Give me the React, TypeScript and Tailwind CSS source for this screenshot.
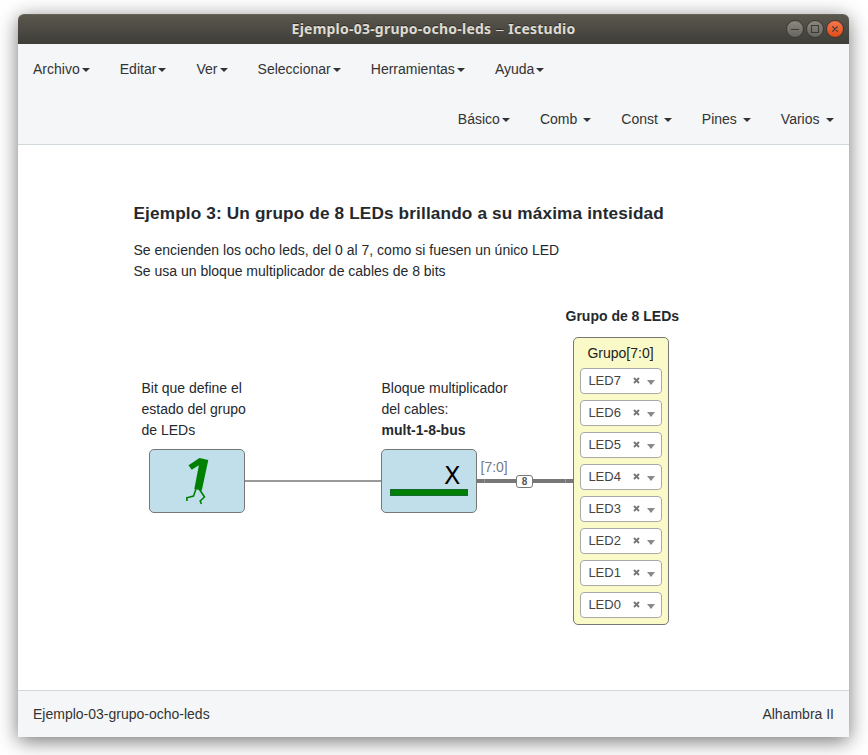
import React from 'react';

const menus = ['Archivo', 'Editar', 'Ver', 'Seleccionar', 'Herramientas', 'Ayuda'];
const blocks = ['Básico', 'Comb ', 'Const ', 'Pines ', 'Varios '];
const leds = [7, 6, 5, 4, 3, 2, 1, 0];

function NavItem({ label }: { label: string }) {
  return (
    <li className="flex h-[50px] items-center whitespace-pre px-[15px]">
      <span>{label}</span>
      <span className="ml-[2.1px] mt-px h-0 w-0 border-x-4 border-t-4 border-x-transparent border-t-[#333]" />
    </li>
  );
}

function TitleBar() {
  return (
    <header className="relative flex h-[30px] shrink-0 items-center justify-center rounded-t-[6px] border-t border-[#66635a] bg-linear-to-b from-[#5a574e] to-[#3e3d38]">
      <h1 className="-mt-[3px] flex h-5 items-center whitespace-pre font-['Noto_Sans',sans-serif] text-[14px] font-bold tracking-[0.23px] text-[#dfdbd2] [text-shadow:0_-1px_0_#2d2c28]">
        <span>Ejemplo-03-grupo-ocho-leds</span>
        <span className="mx-[3.5px] w-[10px] text-center text-[18px] font-light leading-none tracking-normal">–</span>
        <span>Icestudio</span>
      </h1>
      <svg className="absolute right-[4px] top-[4px]" width="60" height="20" viewBox="0 0 60 20" fill="none">
        <defs>
          <linearGradient id="gray" x1="0" y1="0" x2="0" y2="1">
            <stop stopColor="#8b8980" />
            <stop offset="1" stopColor="#66645e" />
          </linearGradient>
          <linearGradient id="orange" x1="0" y1="0" x2="0" y2="1">
            <stop stopColor="#f5794f" />
            <stop offset="1" stopColor="#df4a16" />
          </linearGradient>
        </defs>
        <circle cx="10" cy="10" r="8.5" fill="url(#gray)" stroke="#373630" />
        <circle cx="30" cy="10" r="8.5" fill="url(#gray)" stroke="#373630" />
        <circle cx="50" cy="10" r="8.5" fill="url(#orange)" stroke="#373630" />
        <path d="M6 10.5h8M26.5 6.5h7v7h-7zM47.3 7.3l5.4 5.4M52.7 7.3l-5.4 5.4" stroke="#3c3b36" strokeWidth="1.1" />
      </svg>
    </header>
  );
}

function LedSelect({ n }: { n: number }) {
  return (
    <div className="flex h-[26px] w-[82px] items-center rounded-[4px] border border-[#aaa] bg-white pl-[7.4px] text-[13px] text-[#444]">
      <span className="-mt-px w-[44.6px]">LED{n}</span>
      <svg width="7" height="7" viewBox="0 0 7 7" className="-mt-[2px]">
        <path d="M1 1l5 5M6 1L1 6" stroke="#777" strokeWidth="1.9" />
      </svg>
      <span className="ml-[7px] mt-[3px] h-0 w-0 border-x-4 border-t-[5px] border-x-transparent border-t-[#888]" />
    </div>
  );
}

const note = 'absolute whitespace-nowrap text-[14px] leading-[21px] text-[#24292e]';

function Canvas() {
  return (
    <main className="relative min-h-0 flex-1 bg-white">
      <div className={`${note} left-[115.5px] top-[57px]`}>
        <h2 className="text-[17.2px] font-bold leading-[22px] tracking-[0.147px]">Ejemplo 3: Un grupo de 8 LEDs brillando a su máxima intesidad</h2>
        <p className="mt-[16px]">Se encienden los ocho leds, del 0 al 7, como si fuesen un único LED</p>
        <p>Se usa un bloque multiplicador de cables de 8 bits</p>
      </div>
      <p className={`${note} left-[123.5px] top-[233px]`}>Bit que define el<br />estado del grupo<br />de LEDs</p>
      <p className={`${note} left-[363.5px] top-[233px]`}>Bloque multiplicador<br />del cables:<br /><b>mult-1-8-bus</b></p>
      <p className={`${note} left-[547.5px] top-[161px] font-bold`}>Grupo de 8 LEDs</p>

      <div className="absolute left-[227px] top-[335px] h-[2px] w-[136px] bg-[#999]" />
      <div className="absolute left-[459px] top-[334px] flex h-[4px] w-[96px] justify-between bg-[#777] px-[7px]">
        <span className="w-px bg-[#999]" />
        <span className="w-px bg-[#999]" />
      </div>
      <span className="absolute left-[462.5px] top-[312px] text-[14px] leading-5 text-[#777788]">[7:0]</span>
      <span className="absolute left-[498px] top-[329.5px] flex h-[13px] w-[17px] items-center justify-center rounded-[3px] border border-[#777] bg-white pt-px text-[10px] font-bold leading-none text-[#555]">8</span>

      <div className="absolute left-[131px] top-[304px] h-[64px] w-[96px] rounded-[5px] border border-[#777] bg-[#c0dfeb]">
        <svg width="94" height="62" viewBox="0 0 94 62">
          <path d="M49.5 8l8.8 2-6.5 30.5-7.5-1.6 4.6-23.6-7.2 4.4-3.2-4.4z" fill="#008000" />
          <path d="M46 39l-2.5 7-6.7 1.8.2 3.2M49.5 39.5l5 7.5-4.3 4 1.2 3" fill="none" stroke="#008000" strokeWidth="1.6" />
        </svg>
      </div>
      <div className="absolute left-[363px] top-[304px] h-[64px] w-[96px] rounded-[5px] border border-[#777] bg-[#c0dfeb]">
        <span className="absolute left-[62px] top-[10px] font-['DejaVu_Sans',sans-serif] text-[24px] leading-[32px] text-black">X</span>
        <div className="absolute left-[8px] top-[39px] h-[7px] w-[78px] border border-[#176b32] bg-[#008000]" />
      </div>
      <section className="absolute left-[555px] top-[192px] h-[288px] w-[96px] rounded-[5px] border border-[#777] bg-[#fafac8] px-[6px]">
        <h3 className="h-[30px] pr-px pt-[5px] text-center text-[14px] leading-5 text-[#222]">Grupo[7:0]</h3>
        <div className="flex flex-col gap-[6px]">
          {leds.map((n) => <LedSelect key={n} n={n} />)}
        </div>
      </section>
    </main>
  );
}

export default function App() {
  return (
    <div className="h-[755px] w-[868px] overflow-hidden bg-white px-[18px] pt-[14px] font-['Liberation_Sans',Arial,sans-serif]">
      <div className="flex h-[723px] w-[831px] flex-col rounded-t-[6px] text-[14px] text-[#333] shadow-[0_4px_20px_rgba(0,0,0,0.55)]">
        <TitleBar />
        <nav className="h-[101px] shrink-0 border-b border-[#d1d8dc] bg-[#f4f6f8]">
          <ul className="flex">{menus.map((m) => <NavItem key={m} label={m} />)}</ul>
          <ul className="flex justify-end pr-[0.5px]">{blocks.map((m) => <NavItem key={m} label={m} />)}</ul>
        </nav>
        <Canvas />
        <footer className="flex h-[47px] shrink-0 items-center justify-between border-t border-[#d1d8dc] bg-[#f4f6f8] px-[15px]">
          <span>Ejemplo-03-grupo-ocho-leds</span>
          <span>Alhambra II</span>
        </footer>
      </div>
    </div>
  );
}
